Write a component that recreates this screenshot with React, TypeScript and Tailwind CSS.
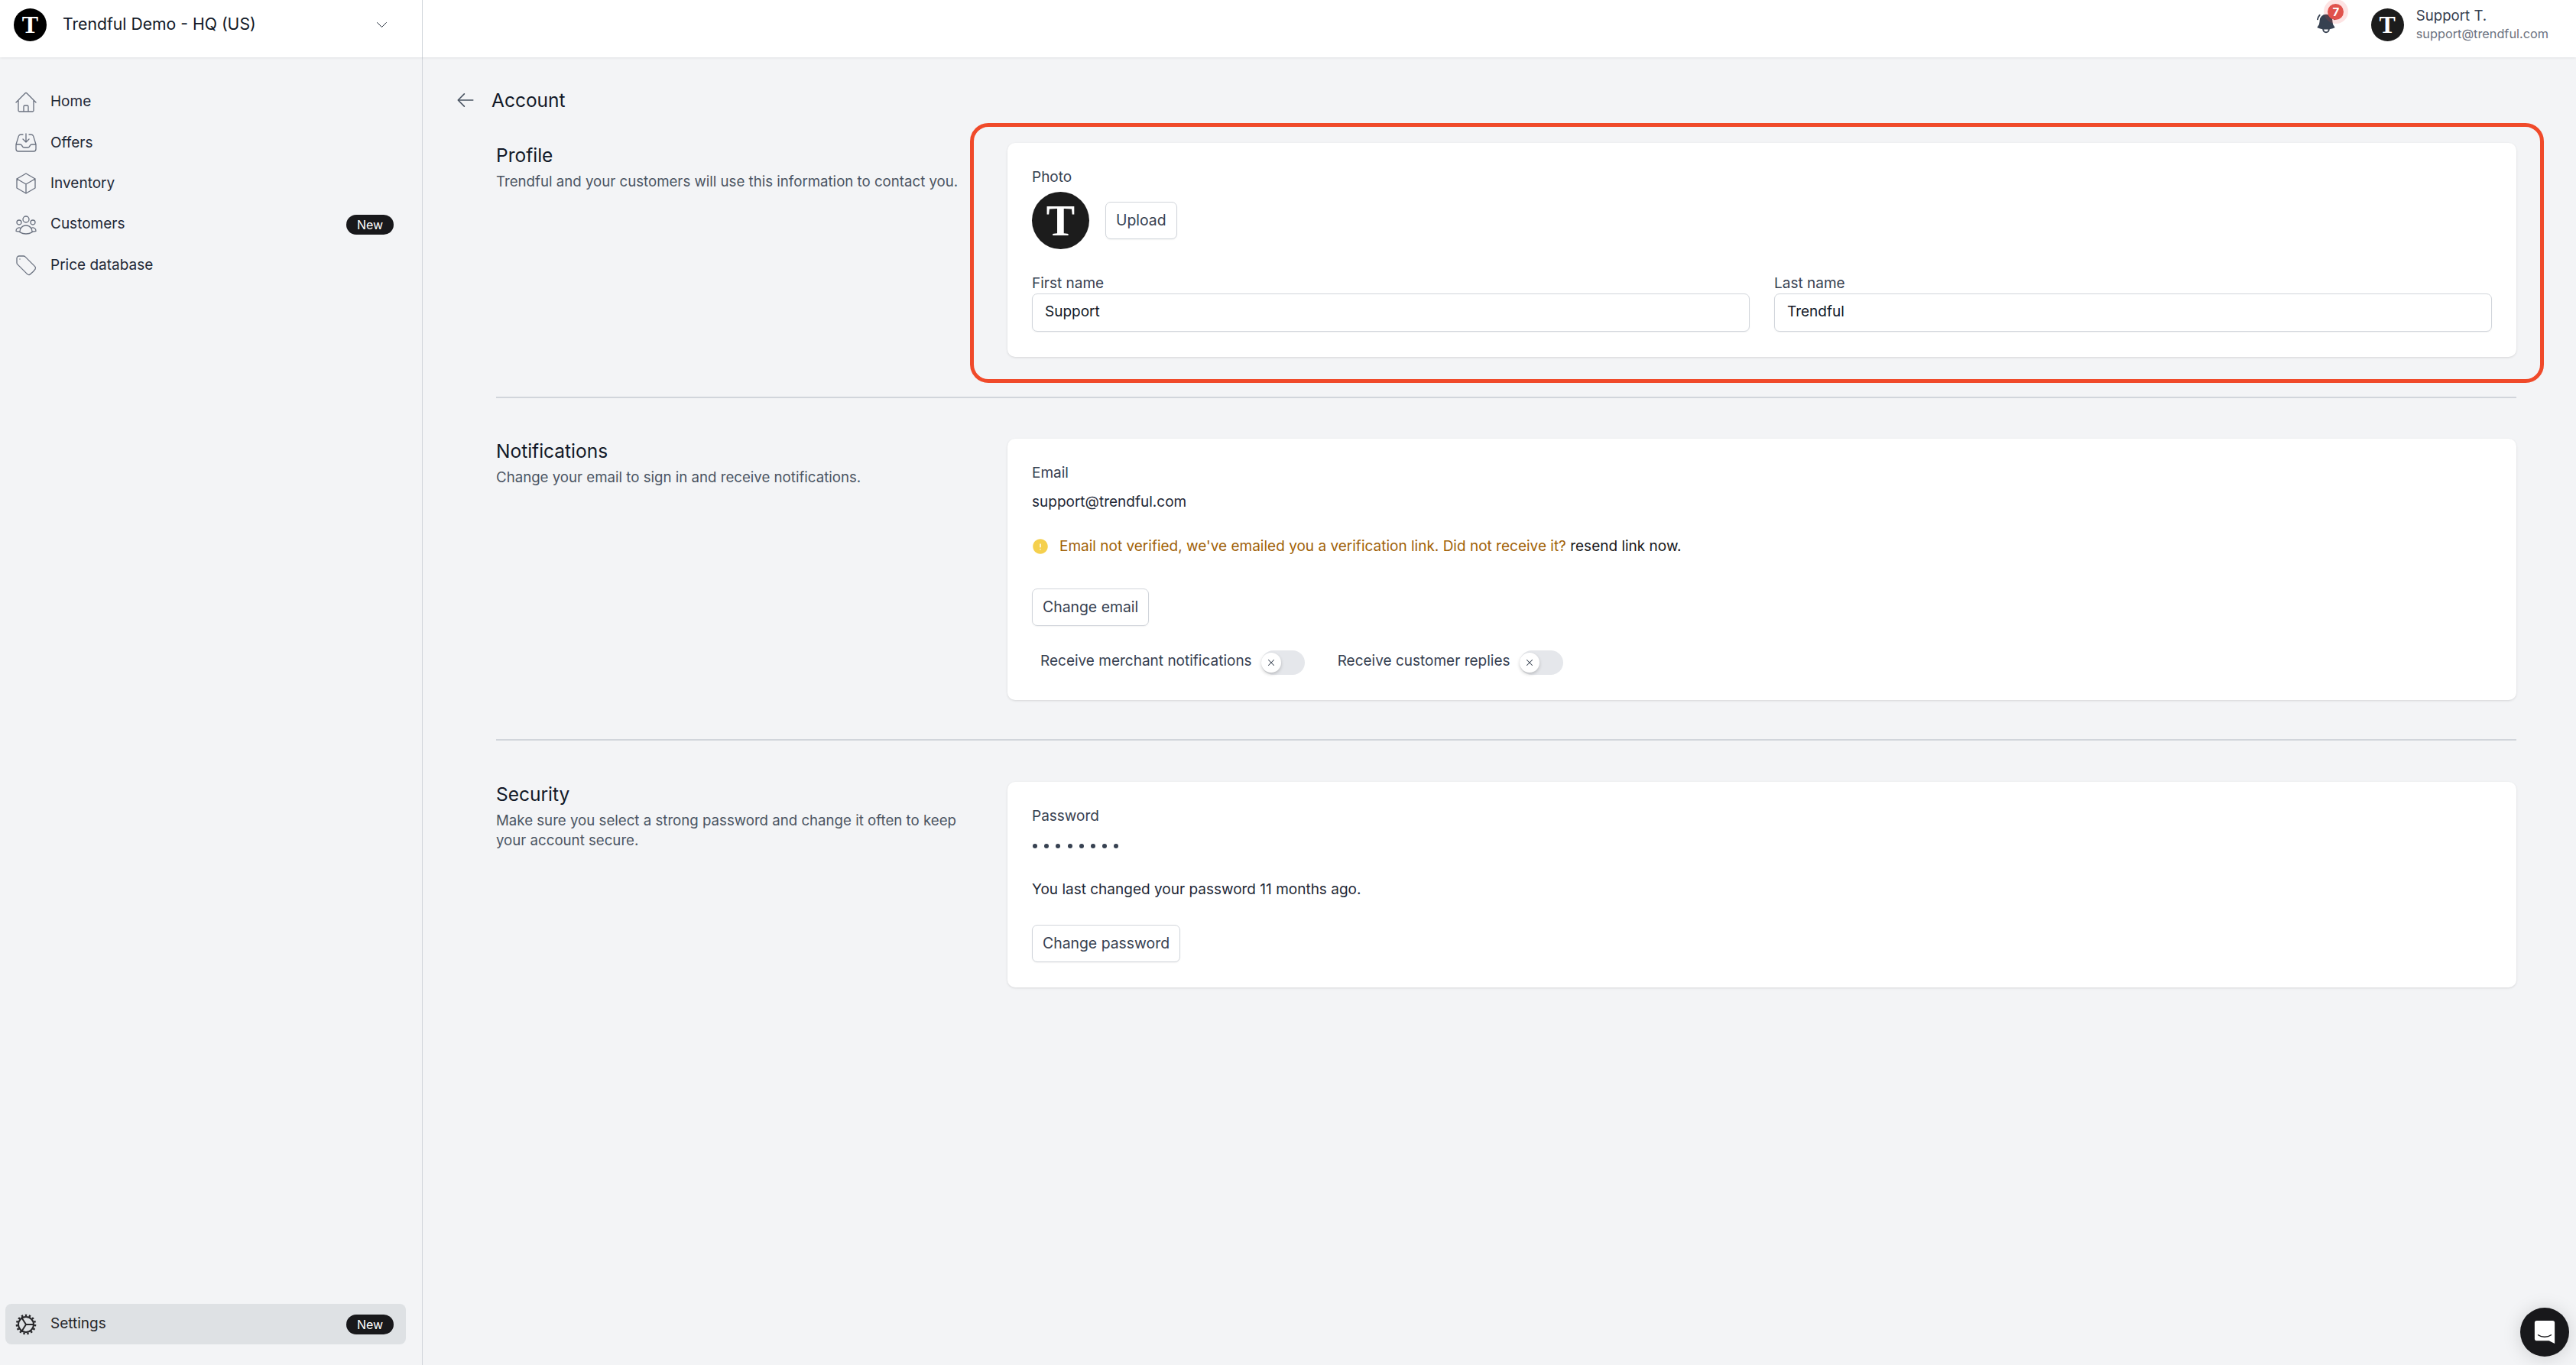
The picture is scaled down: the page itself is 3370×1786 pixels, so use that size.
import React from 'react';
import {
  HiOutlineHome,
  HiOutlineInboxArrowDown,
  HiOutlineCube,
  HiOutlineUserGroup,
  HiOutlineTag,
  HiOutlineChevronDown,
  HiOutlineArrowLeft,
  HiBellAlert,
  HiExclamationCircle,
} from 'react-icons/hi2';
import { X } from 'lucide-react';

const navItems = [
  { label: 'Home', Icon: HiOutlineHome },
  { label: 'Offers', Icon: HiOutlineInboxArrowDown },
  { label: 'Inventory', Icon: HiOutlineCube },
  { label: 'Customers', Icon: HiOutlineUserGroup, badge: true },
  { label: 'Price database', Icon: HiOutlineTag },
];

const NewBadge = () => (
  <span className="ml-auto flex h-[26px] w-[62px] items-center justify-center rounded-full bg-[#18181b] text-[16px] font-normal leading-none text-white">
    New
  </span>
);

const Logo = ({ bg = 'bg-black' }: { bg?: string }) => (
  <div className={`flex h-[43px] w-[43px] shrink-0 items-center justify-center rounded-full ${bg}`}>
    <span className="font-['Liberation_Serif',serif] text-[32px] font-bold leading-none text-white">T</span>
  </div>
);

const GearIcon = () => (
  <svg className="h-[28px] w-[28px]" viewBox="0 0 28 28" fill="none" stroke="#27272a">
    <circle cx="14" cy="14" r="10" strokeWidth="2" />
    <circle cx="14" cy="14" r="12" strokeWidth="2.6" strokeDasharray="2.4 2.6" />
    <path d="M14 14 L8 4.5 M14 14 L24 14 M14 14 L8 23.5" strokeWidth="2" />
  </svg>
);

const Button = ({ children }: { children: React.ReactNode }) => (
  <button className="h-[49px] rounded-[7px] border border-[#d1d5db] bg-white px-[13px] text-[19.4px] font-normal text-[#374151] shadow-[0_1px_2px_rgba(0,0,0,0.05)]">
    {children}
  </button>
);

const Toggle = () => (
  <span className="relative block h-[32px] w-[57px] shrink-0 rounded-full bg-[#e5e7eb]">
    <span className="absolute left-0 top-[3px] flex h-[26px] w-[26px] items-center justify-center rounded-full bg-white shadow-[0_2px_4px_rgba(0,0,0,0.2)]">
      <X size={14} strokeWidth={1.75} className="text-[#374151]" />
    </span>
  </span>
);

const Field = ({ label, value }: { label: string; value: string }) => (
  <div className="flex-1">
    <label className="block text-[19px] font-normal leading-[26px] text-[#374151]">{label}</label>
    <div className="flex h-[50px] items-center rounded-[7px] border border-[#d1d5db] bg-white px-[16px] pb-[1px] text-[19px] font-normal text-[#111827] shadow-[0_1px_2px_rgba(0,0,0,0.05)]">
      {value}
    </div>
  </div>
);

const Section = ({
  title,
  children,
  description,
  cardClass,
}: {
  title: string;
  description: React.ReactNode;
  children: React.ReactNode;
  cardClass: string;
}) => (
  <section className="flex">
    <div className="w-[669px] shrink-0 pr-[60px]">
      <h2 className="text-[24.5px] font-normal leading-[32px] text-[#111827]">{title}</h2>
      <p className="mt-[6px] whitespace-nowrap text-[18.67px] leading-[26px] text-[#4b5563]">{description}</p>
    </div>
    <div className={`flex-1 rounded-[10px] bg-white px-[32px] shadow-[0_1px_3px_rgba(0,0,0,0.12)] ${cardClass}`}>
      {children}
    </div>
  </section>
);

export default function App() {
  return (
    <div className="relative flex h-[1786px] w-[3370px] flex-col overflow-hidden bg-[#f3f4f6] font-['Inter',sans-serif]">
      {/* Top bar */}
      <header className="z-10 flex h-[75px] shrink-0 items-center bg-white shadow-[0_1px_3px_rgba(0,0,0,0.08)]">
        <div className="flex h-full w-[553px] shrink-0 items-center border-r border-[#d1d5db] pb-[11px] pl-[18px] pr-[43px]">
          <Logo />
          <span className="ml-[21px] text-[21.2px] text-[#111827]">Trendful Demo - HQ (US)</span>
          <HiOutlineChevronDown size={19} strokeWidth={1.25} className="ml-auto text-[#1f2937]" />
        </div>
        <div className="ml-auto flex items-center pb-[11px] pr-[36px]">
          <div className="relative mr-[47px] h-[26px] w-[24px]">
            <HiBellAlert size={30} className="absolute -left-[5px] -top-[3px] text-[#374151]" />
            <span className="absolute -top-[20px] left-[7px] flex h-[32px] w-[32px] items-center justify-center rounded-full bg-[#ef4444]/15">
              <span className="flex h-[21px] w-[21px] items-center justify-center rounded-full bg-[#e0524c] text-[15px] font-bold leading-none text-white">
                7
              </span>
            </span>
          </div>
          <div className="-ml-[2px]">
            <Logo bg="bg-[#1c1c1c]" />
          </div>
          <div className="ml-[16px]">
            <div className="text-[18.67px] leading-[25px] text-[#374151]">Support T.</div>
            <div className="text-[16.3px] leading-[23px] text-[#6b7280]">support@trendful.com</div>
          </div>
        </div>
      </header>

      <div className="flex min-h-0 flex-1">
        {/* Sidebar */}
        <aside className="flex w-[553px] shrink-0 flex-col border-r border-[#d1d5db] pb-[27px] pl-[7px] pr-[21px] pt-[32px]">
          <nav className="flex flex-col">
            {navItems.map(({ label, Icon, badge }) => (
              <a key={label} className="flex h-[53.3px] items-center pl-[13px] pr-[16px] text-[19px] font-normal text-[#1f2937]">
                <Icon size={32} strokeWidth={1} className="-ml-[2px] mr-[16px] text-[#6b7280]" />
                {label}
                {badge && <NewBadge />}
              </a>
            ))}
          </nav>
          <a className="mt-auto flex h-[53px] items-center rounded-[8px] bg-[#dee1e4] pl-[13px] pr-[16px] text-[19px] font-normal text-[#27272a]">
            <span className="mr-[18px]">
              <GearIcon />
            </span>
            Settings
            <NewBadge />
          </a>
        </aside>

        {/* Main */}
        <main className="flex-1 pl-[96px] pr-[78px]">
          <div className="-ml-[53px] mt-[40px] flex h-[32px] items-center">
            <HiOutlineArrowLeft size={26} strokeWidth={1.5} className="text-[#4b5563]" />
            <h1 className="ml-[21px] text-[24.5px] font-normal text-[#111827]">Account</h1>
          </div>

          <div className="mt-[40px]">
            <Section
              title="Profile"
              description="Trendful and your customers will use this information to contact you."
              cardClass="h-[280px] pt-[32px]"
            >
              <div className="text-[19px] font-normal leading-[26px] text-[#374151]">Photo</div>
              <div className="mt-[6px] flex items-center">
                <div className="flex h-[75px] w-[75px] items-center justify-center rounded-full bg-[#1c1c1c]">
                  <span className="font-['Liberation_Serif',serif] text-[56px] font-bold leading-none text-white">T</span>
                </div>
                <div className="ml-[21px]">
                  <Button>Upload</Button>
                </div>
              </div>
              <div className="mt-[32px] flex gap-[32px]">
                <Field label="First name" value="Support" />
                <Field label="Last name" value="Trendful" />
              </div>
            </Section>
          </div>

          <div className="mb-[53px] mt-[52px] h-[2px] bg-[#d1d5db]" />

          <Section
            title="Notifications"
            description="Change your email to sign in and receive notifications."
            cardClass="h-[342px] pt-[32px]"
          >
            <div className="text-[19px] font-normal leading-[26px] text-[#374151]">Email</div>
            <div className="mt-[12px] text-[19px] font-normal leading-[26px] text-[#1f2937]">support@trendful.com</div>
            <div className="mt-[32px] flex h-[26px] items-center text-[19px] font-normal">
              <HiExclamationCircle size={24} className="-ml-[1px] text-[#f5d04e]" />
              <span className="ml-[13px] text-[#a16207]">
                Email not verified, we've emailed you a verification link. Did not receive it?{' '}
                <span className="text-[#18181b]">resend link now.</span>
              </span>
            </div>
            <div className="mt-[42px]">
              <Button>Change email</Button>
            </div>
            <div className="mt-[32px] flex items-center pl-[11px]">
              <span className="-translate-y-[2px] text-[19px] font-normal text-[#374151]">Receive merchant notifications</span>
              <span className="ml-[12px]">
                <Toggle />
              </span>
              <span className="ml-[43px] -translate-y-[2px] text-[19px] font-normal text-[#374151]">Receive customer replies</span>
              <span className="ml-[12px]">
                <Toggle />
              </span>
            </div>
          </Section>

          <div className="mb-[54px] mt-[51px] h-[2px] bg-[#d1d5db]" />

          <Section
            title="Security"
            description={
              <>
                Make sure you select a strong password and change it often to keep
                <br />
                your account secure.
              </>
            }
            cardClass="h-[269px] pt-[32px]"
          >
            <div className="text-[19px] font-normal leading-[26px] text-[#374151]">Password</div>
            <div className="mt-[13px] flex h-[26px] items-center gap-[9.2px] pl-[1px]">
              {[0, 1, 2, 3, 4, 5, 6, 7].map((i) => (
                <span key={i} className="h-[6px] w-[6px] rounded-full bg-[#374151]" />
              ))}
            </div>
            <div className="mt-[31px] text-[19px] font-normal leading-[26px] text-[#1f2937]">
              You last changed your password 11 months ago.
            </div>
            <div className="mt-[33px]">
              <Button>Change password</Button>
            </div>
          </Section>
        </main>
      </div>

      {/* Annotation around the profile card */}
      <div className="pointer-events-none absolute left-[1269px] top-[161px] h-[340px] w-[2059px] rounded-[24px] border-[5px] border-[#f04a2a]" />

      {/* Chat launcher */}
      <div className="absolute bottom-[11px] right-[9px] flex h-[64px] w-[64px] items-center justify-center rounded-full bg-[#18181b] shadow-[0_2px_24px_rgba(0,0,0,0.15)]">
        <svg className="h-[30px] w-[30px]" viewBox="0 0 28 32">
          <path
            fill="#fff"
            d="M3 0h22a3 3 0 0 1 3 3v29l-8-4H3a3 3 0 0 1-3-3V3a3 3 0 0 1 3-3z"
          />
          <path d="M5 20c5 3.5 13 3.5 18 0" fill="none" stroke="#18181b" strokeWidth="1.6" strokeLinecap="round" />
        </svg>
      </div>
    </div>
  );
}
